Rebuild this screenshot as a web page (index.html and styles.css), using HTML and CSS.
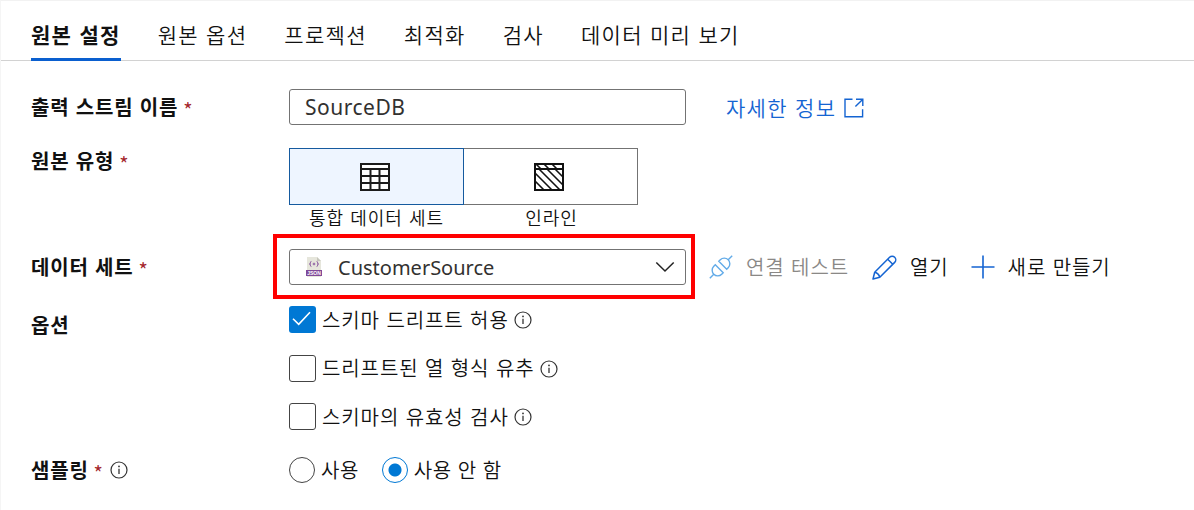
FILE: index.html
```html
<!DOCTYPE html>
<html lang="ko">
<head>
<meta charset="utf-8">
<title>원본 설정</title>
<link rel="stylesheet" href="styles.css">
</head>
<body>
<svg class="defs" width="0" height="0" aria-hidden="true">
  <symbol id="info" viewBox="0 0 18 18">
    <circle cx="9" cy="9" r="8" fill="none" stroke="#333" stroke-width="1.2"/>
    <path d="M9 7.7v5.2" stroke="#333" stroke-width="1.3"/>
    <circle cx="9" cy="5.4" r=".9" fill="#333"/>
  </symbol>
</svg>
<div class="panel">
  <nav class="tabs">
    <a class="tab active">원본 설정</a>
    <a class="tab">원본 옵션</a>
    <a class="tab">프로젝션</a>
    <a class="tab">최적화</a>
    <a class="tab">검사</a>
    <a class="tab">데이터 미리 보기</a>
  </nav>
  <main class="form">
    <div class="row row-name">
      <div class="label">출력 스트림 이름<span class="req">*</span></div>
      <div class="field stream">SourceDB</div>
      <a class="more">자세한 정보
        <svg width="20" height="20" viewBox="0 0 20 20" fill="none" stroke="#1464d2" stroke-width="1.4"><path d="M8.5 1.2H1v17.6h17.6v-7.6M12 1.2h6.800V8M18.600 1.400L11.400 8.600"/></svg>
      </a>
    </div>
    <div class="row row-type">
      <div class="label">원본 유형<span class="req">*</span></div>
      <div class="types">
        <div class="type">
          <div class="type-box selected">
            <svg width="30" height="28" viewBox="0 0 30 28" fill="none" stroke="#1b1b1b" stroke-width="2"><rect x="1" y="1" width="28" height="26" fill="#fff"/><path d="M1 6h28M1 13h28M1 20h28M10.500 6v21M19.500 6v21"/></svg>
          </div>
          <div class="type-name">통합 데이터 세트</div>
        </div>
        <div class="type">
          <div class="type-box plain">
            <svg width="30" height="28" viewBox="0 0 30 28" fill="none" stroke="#111" stroke-width="2"><rect x="1" y="1" width="28" height="26"/><path d="M1 6h28"/><path stroke-width="1.600" d="M2 1l5 5M10 1l5 5M18 1l5 5M1 18l9 9M1 10l17 17M5 6l21 21M13 6l16 16M21 6l8 8"/></svg>
          </div>
          <div class="type-name">인라인</div>
        </div>
      </div>
    </div>
    <div class="row row-dataset">
      <div class="label">데이터 세트<span class="req">*</span></div>
      <div class="select-wrap">
        <div class="field select">
          <svg class="json" width="16" height="20" viewBox="0 0 16 20"><path d="M1 0h10l4 4v16H1z" fill="#e6e6dc"/><path d="M11 0v4h4z" fill="#c6c6bc"/><rect y="13" width="16" height="6" fill="#804998"/><g fill="none" stroke="#804998" stroke-width=".9"><path d="M5.400 4.500q-1.200 0-1 1.300t-1 1.200q1.200 0 1 1.200t1 1.300M10.600 4.500q1.200 0 1 1.300t1 1.200q-1.200 0-1 1.200t-1 1.300"/><path d="M8 5.700v2.600M6.700 7h2.600"/></g><text x="8" y="17.800" class="json-text" text-anchor="middle">JSON</text></svg>
          <span class="value">CustomerSource</span>
          <svg class="chevron" width="20" height="12" viewBox="0 0 20 12" fill="none" stroke="#222" stroke-width="1.500"><path d="M1.300 1.500L10 10l8.700-8.500"/></svg>
        </div>
        <div class="highlight"></div>
      </div>
      <div class="actions">
        <div class="action disabled">
          <svg width="24" height="24" viewBox="0 0 24 24" fill="none" stroke="#62abe8" stroke-width="1.400"><path d="M.8 23.200l4-4M19.200 4.800l4-4M6.300 9.800l7.900 7.900-1.500 1.500a5.500 5.500 0 0 1-7.900-7.900zM9.800 6.300l7.900 7.900 1.500-1.500a5.500 5.500 0 0 0-7.900-7.900z"/></svg>
          <span>연결 테스트</span>
        </div>
        <div class="action open">
          <svg width="25" height="25" viewBox="0 0 25 25" fill="none" stroke="#1464d2" stroke-width="1.500" stroke-linejoin="round"><path d="M1 24l1.700-6.800L17.600 2.300a3.600 3.600 0 0 1 5.100 5.100L7.800 22.300zM15.700 4.200l5.100 5.100M2.700 17.200c2 .2 4.600 2.600 5.100 5.100"/></svg>
          <span>열기</span>
        </div>
        <div class="action new">
          <svg width="24" height="24" viewBox="0 0 24 24" stroke="#1464d2" stroke-width="1.600"><path d="M12 .5v23M.5 12h23"/></svg>
          <span>새로 만들기</span>
        </div>
      </div>
    </div>
    <div class="row row-options">
      <div class="label">옵션</div>
      <div class="checks">
        <div class="check"><span class="box on"><svg width="27" height="27" viewBox="0 0 27 27" fill="none" stroke="#fff" stroke-width="1.600"><path d="M4 12.700l5.700 5.700L21 6.200"/></svg></span><span>스키마 드리프트 허용</span><svg class="info" width="18" height="18"><use href="#info"/></svg></div>
        <div class="check"><span class="box"></span><span>드리프트된 열 형식 유추</span><svg class="info" width="18" height="18"><use href="#info"/></svg></div>
        <div class="check"><span class="box"></span><span>스키마의 유효성 검사</span><svg class="info" width="18" height="18"><use href="#info"/></svg></div>
      </div>
    </div>
    <div class="row row-sampling">
      <div class="label">샘플링<span class="req">*</span><svg class="info" width="18" height="18"><use href="#info"/></svg></div>
      <div class="radios">
        <div class="radio"><span class="dot"></span><span>사용</span></div>
        <div class="radio"><span class="dot on"></span><span>사용 안 함</span></div>
      </div>
    </div>
  </main>
</div>
</body>
</html>
```

FILE: styles.css
```css
* { box-sizing: border-box; }
body { margin: 0; background: #fff; color: #111; font-family: "Noto Sans CJK KR", sans-serif; font-size: 20px; font-weight: 350; line-height: 26px; letter-spacing: 0.9px; white-space: nowrap; }
.defs { display: block; height: 0; }
.panel { height: 510px; overflow: hidden; border-top: 1px solid #f2f2f2; border-left: 1px solid #f5f5f5; }
.tabs { display: flex; gap: 37px; height: 60px; padding: 0 30px; border-bottom: 1px solid #d2d2d2; font-size: 21px; letter-spacing: 1.3px; }
.tab { display: block; height: 60px; line-height: 66px; }
.active { font-weight: 700; border-bottom: 3px solid #0a5fcf; }
.form { padding: 28px 0 0 30px; }
.row { display: flex; }
.label { width: 258px; flex: none; font-weight: 700; letter-spacing: 0.8px; }
.req { display: inline-block; height: 20px; line-height: 26px; color: #a4262c; font-weight: 400; margin-left: 5px; vertical-align: -3px; }
.row-name { height: 36px; align-items: center; margin-bottom: 23px; }
.row-name .label, .row-dataset .label, .row-type .label { height: 26px; }
.field { width: 397px; height: 36px; flex: none; border: 1px solid #737373; border-radius: 3px; background: #fff; color: #323130; font-family: "Noto Sans", sans-serif; font-weight: 400; line-height: 34px; }
.stream { padding-left: 15px; font-size: 21px; letter-spacing: 0.5px; }
.more { display: flex; align-items: center; gap: 8px; margin-left: 40px; color: #1464d2; font-size: 21px; letter-spacing: 1.3px; }
.more svg { margin-top: 2px; }
.row-type { height: 101px; }
.types { display: flex; }
.type { width: 175px; text-align: center; }
.type-box { height: 57px; display: flex; align-items: center; justify-content: center; border: 1px solid #737373; }
.type-box svg { margin-right: 3px; }
.plain { border-left: 0; width: 174px; }
.selected { border-color: #155a9f; background: #eef5ff; }
.type-name { font-size: 18px; line-height: 24px; letter-spacing: 1px; }
.row-dataset { height: 36px; align-items: center; }
.select-wrap { position: relative; }
.select { display: flex; align-items: center; padding: 0 10px 0 16px; letter-spacing: 0; }
.value { padding-top: 2px; }
.json { margin-right: 16px; }
.json-text { font: bold 5px "Liberation Sans", sans-serif; letter-spacing: 0; fill: #fff; }
.chevron { margin-left: auto; }
.highlight { position: absolute; left: -16px; top: -15px; width: 422px; height: 65px; border: 4px solid #f00; }
.actions { display: flex; margin-left: 23px; }
.action { display: flex; align-items: center; gap: 13px; }
.disabled { color: #8a8886; }
.open { margin-left: 23px; }
.new { margin-left: 22px; }
.row-options { height: 152px; padding-top: 21px; }
.row-options .label { padding-top: 6px; }
.checks { display: flex; flex-direction: column; gap: 21.500px; }
.check, .radio { display: flex; align-items: center; gap: 6px; height: 27px; }
.check .info { margin-left: -1px; margin-top: 1px; }
.box { width: 27px; height: 27px; border: 1px solid #444; border-radius: 3px; }
.box.on { border: 0; background: #0078d4; }
.box svg { display: block; }
.row-sampling .label { display: flex; align-items: center; }
.row-sampling .req { height: 26px; line-height: 32px; }
.row-sampling .info { margin-left: 6px; }
.row-sampling { height: 66px; padding-top: 20px; align-items: flex-start; }
.radios { display: flex; gap: 23px; margin-top: -1px; }
.radio { letter-spacing: 0.5px; }
.dot { width: 26px; height: 26px; border: 1px solid #444; border-radius: 50%; }
.dot.on { border-color: #0078d4; background: radial-gradient(circle, #0078d4 6px, #fff 7px); }
```
